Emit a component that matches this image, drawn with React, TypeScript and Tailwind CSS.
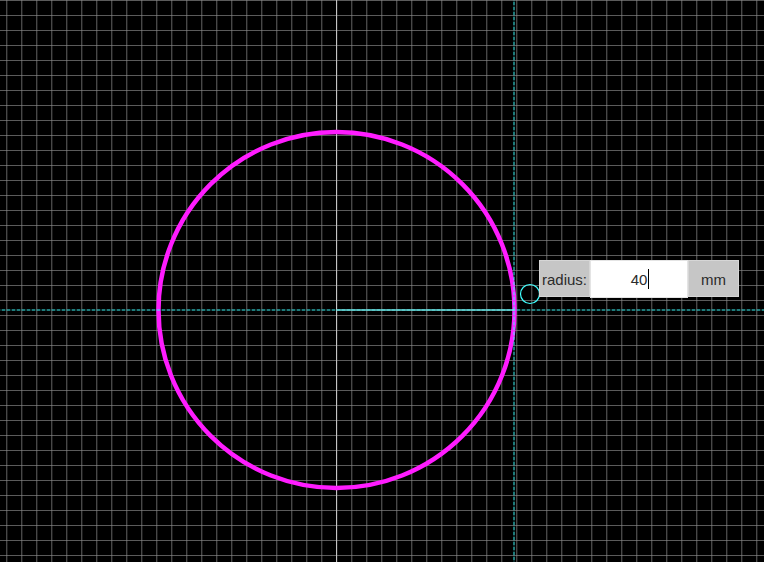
import { useState } from "react";

const RADIUS_PX = 178;
const CENTER = { x: 336.5, y: 310 };

function Drawing() {
    const edge = CENTER.x + RADIUS_PX;

    return (
        <svg className="block w-full h-full" aria-hidden="true">
            <defs>
                <pattern id="grid" width="15" height="15" patternUnits="userSpaceOnUse">
                    <rect x="6" width="1" height="15" fill="#484848" />
                    <rect x="7" width="1" height="15" fill="#1c1c1c" />
                    <rect width="15" height="1" fill="#8c8c8c" fillOpacity="0.65" />
                </pattern>
            </defs>
            <rect width="100%" height="100%" fill="url(#grid)" />

            <rect x="336" width="1" height="100%" fill="#c4c4c4" />

            <circle cx={CENTER.x} cy={CENTER.y} r={RADIUS_PX} fill="none" stroke="#ff1cff" strokeWidth="4.5" />

            {/* snap guides through the center and the radius handle */}
            <g stroke="#40ffff" strokeWidth="2">
                <line x1="0" y1="310" x2="100%" y2="310" strokeOpacity="0.16" />
                <line x1="2" y1="310" x2="100%" y2="310" strokeOpacity="0.38" strokeDasharray="3 2" />
                <line x1="514" y1="0" x2="514" y2="100%" strokeOpacity="0.16" />
                <line x1="514" y1="2" x2="514" y2="100%" strokeOpacity="0.38" strokeDasharray="3 2" />
            </g>

            <line x1={CENTER.x} y1="310" x2={edge} y2="310" stroke="#70e4e4" strokeOpacity="0.7" strokeWidth="2" />
            <circle cx="530" cy="294" r="9.5" fill="none" stroke="#40ffff" strokeWidth="1.2" />
        </svg>
    );
}

interface RadiusInputProps {
    value: string;
    onChange: (value: string) => void;
}

function RadiusInput({ value, onChange }: RadiusInputProps) {
    return (
        <div className="absolute left-[539px] top-[260px] flex items-start w-[200px] text-[15px] leading-5 text-[#2b2b2b]">
            <label
                htmlFor="radius"
                className="flex items-center justify-center w-[51px] h-[37px] pt-0.5 bg-[#c6c6c6] border border-[#d6d6d6]"
            >
                radius:
            </label>
            <div className="relative flex-1">
                <input
                    id="radius"
                    type="text"
                    inputMode="decimal"
                    value={value}
                    onChange={(e) => onChange(e.target.value)}
                    className="block w-full h-[38px] bg-white border border-[#e4e4e4] text-center caret-transparent outline-none"
                />
                <span className="absolute left-[58px] top-[9px] w-px h-5 bg-black pointer-events-none" />
            </div>
            <span className="flex items-center justify-center w-[51px] h-[37px] pt-0.5 bg-[#c6c6c6] border border-[#d6d6d6]">
                mm
            </span>
        </div>
    );
}

export default function App() {
    const [radius, setRadius] = useState("40");

    return (
        <main className="relative w-full h-screen overflow-hidden bg-black font-['Liberation_Sans',Arial,sans-serif]">
            <Drawing />
            <RadiusInput value={radius} onChange={setRadius} />
        </main>
    );
}
